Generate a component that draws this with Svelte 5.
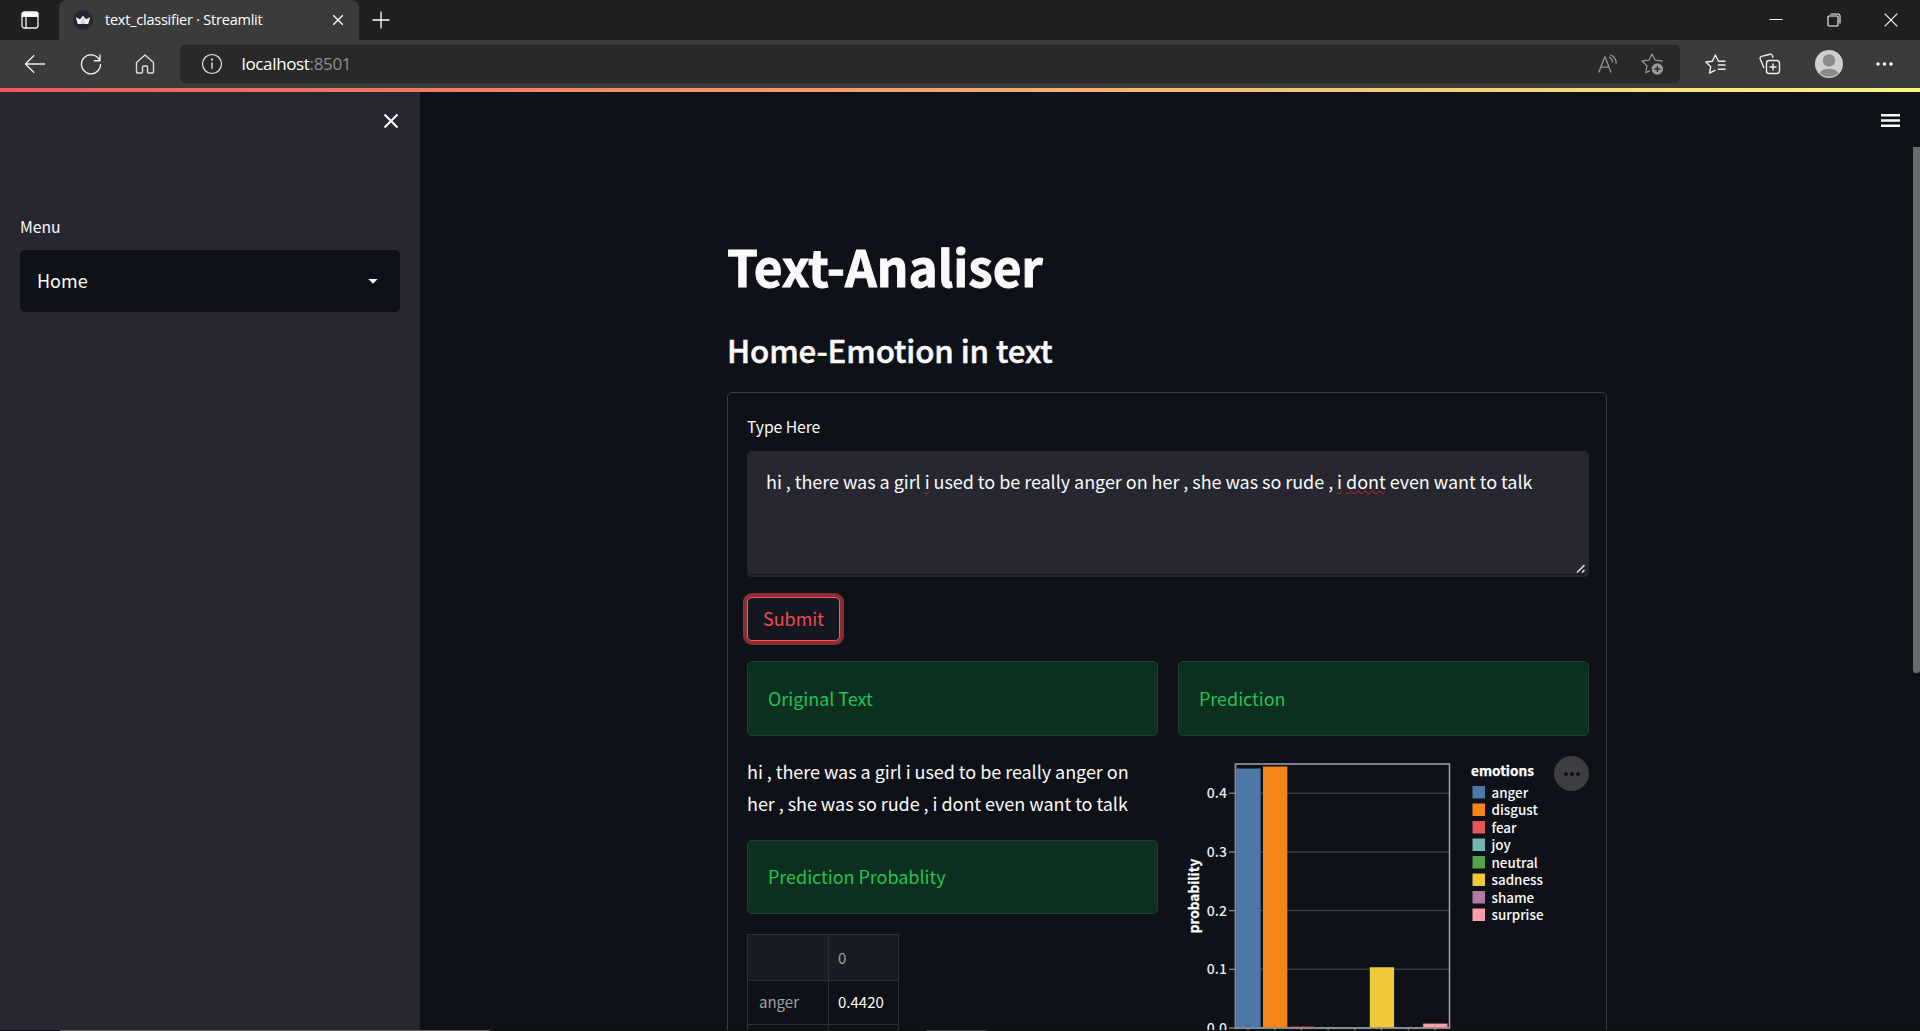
<script>
  const legend = [
    { name: 'anger', color: '#4c78a8' },
    { name: 'disgust', color: '#f58518' },
    { name: 'fear', color: '#e45756' },
    { name: 'joy', color: '#72b7b2' },
    { name: 'neutral', color: '#54a24b' },
    { name: 'sadness', color: '#eeca3b' },
    { name: 'shame', color: '#b279a2' },
    { name: 'surprise', color: '#ff9da6' }
  ];
  const values = [0.442, 0.4455, 0.0023, 0.0014, 0.0003, 0.1035, 0.0003, 0.0075];
  const ticks = [0.4, 0.3, 0.2, 0.1, 0];
  const base = 272;
  const y = (v) => base - v * 587;
</script>

<div class="window">
  <header class="tabstrip">
    <div class="tab-actions">
      <svg width="20" height="20" viewBox="0 0 20 20" fill="none" stroke="#f2f2f2" stroke-width="1.3"><rect x="2" y="2" width="16" height="16" rx="2.5" /><path d="M2.5 2.7h15v3.6h-15z" fill="#fff" /><path d="M6 6v12" /></svg>
    </div>
    <div class="tab">
      <svg class="favicon" width="20" height="20" viewBox="0 0 20 20"><circle cx="10" cy="10" r="10" fill="#262730" /><path d="M2.8 7.3 7 9.2 10 5.8l3 3.4 4.2-1.9-2 6.6H4.8Z" fill="#f4f4f6" /><path d="m10 5.8 2.5 8.1h-5Z" fill="#d0d0d6" /></svg>
      <span class="tab-title">text_classifier · Streamlit</span>
      <svg width="12" height="12" viewBox="0 0 12 12" stroke="#fff" stroke-width="1.3"><path d="m1.2 1.2 9.6 9.6M10.8 1.2l-9.6 9.6" /></svg>
    </div>
    <svg class="plus" width="18" height="18" viewBox="0 0 18 18" stroke="#fff" stroke-width="1.3"><path d="M9 .5v17M.5 9h17" /></svg>
    <div class="window-buttons">
      <svg width="14" height="14" viewBox="0 0 14 14" stroke="#fff"><path d="M.5 6.5h13" /></svg>
      <svg width="14" height="14" viewBox="0 0 14 14" stroke="#fff" stroke-width="1.1" fill="none"><rect x="1" y="3" width="10" height="10" rx="1" /><path d="M3.5 1H11a2 2 0 0 1 2 2v7.5" /></svg>
      <svg width="14" height="14" viewBox="0 0 14 14" stroke="#fff" stroke-width="1.1"><path d="m.7.7 12.6 12.6M13.3.7.7 13.3" /></svg>
    </div>
  </header>

  <nav class="toolbar">
    <div class="nav-icons">
      <svg width="22" height="20" viewBox="0 0 22 20" fill="none" stroke="#eee" stroke-width="1.3"><path d="M21 10H1.5M10.2 1.2 1.4 10l8.8 8.8" /></svg>
      <svg width="22" height="22" viewBox="0 0 22 22" fill="none" stroke="#eee" stroke-width="1.35"><path d="M20 8.2A9.5 9.5 0 1 0 20.5 11M20 1.5v6.2h-6.2" /></svg>
      <svg width="20" height="20" viewBox="0 0 20 20" fill="none" stroke="#ddd" stroke-width="1.4" stroke-linejoin="round"><path d="M1.5 8.5 10 1l8.5 7.5V18a1 1 0 0 1-1 1h-4a1 1 0 0 1-1-1v-5a1 1 0 0 0-1-1h-3a1 1 0 0 0-1 1v5a1 1 0 0 1-1 1h-4a1 1 0 0 1-1-1Z" /></svg>
    </div>
    <div class="address">
      <svg width="22" height="22" viewBox="0 0 22 22" fill="none" stroke="#e8e8e8" stroke-width="1.2"><circle cx="11" cy="11" r="9.5" /><path d="M11 9.5v6.3" stroke-width="1.4" /><circle cx="11" cy="6.7" r=".5" /></svg>
      <span class="url">localhost<span class="port">:8501</span></span>
      <div class="address-icons">
        <svg width="20" height="20" viewBox="0 0 20 20" fill="none" stroke="#929292" stroke-width="1.3"><path d="M.8 18.5 6.6 3.2h.6L13 18.5M3 13.2h8M11 3.2a6 6 0 0 1 3.4 5.3M12.2.8a9.5 9.5 0 0 1 6 9" /></svg>
        <svg width="22" height="22" viewBox="0 0 22 22" fill="none" stroke="#929292" stroke-width="1.3" stroke-linejoin="round"><path d="M20.7 9.2V8l-6.5-.8L11 1 8 7.2 1 8l5 5-1.2 6.7 4.2-2" /><circle cx="16.3" cy="16" r="5.7" fill="#999" stroke="none" /><path d="M16.3 13v6M13.3 16h6" stroke="#292929" stroke-width="1.3" /></svg>
      </div>
    </div>
    <div class="right-icons">
      <svg width="21" height="20" viewBox="0 0 21 20" fill="none" stroke="#eee" stroke-width="1.4" stroke-linejoin="round"><path d="M20.5 7.2h-7L10.3 1 7.4 7.2.9 8l4.8 4.8-1.2 6.4 6-3.1M12.8 11h7.7M12.8 15.3h7.7" /></svg>
      <svg width="22" height="22" viewBox="0 0 22 22" fill="none" stroke="#eee" stroke-width="1.4"><rect x="7.5" y="7.5" width="13" height="13" rx="2.5" /><path d="M14 10.5v7M10.5 14h7M5 15 1.2 6a2 2 0 0 1 1.3-2.6L11 1.2a2 2 0 0 1 2.3 1.3l.8 2.3" /></svg>
      <svg width="28" height="28" viewBox="0 0 28 28"><circle cx="14" cy="14" r="14" fill="#d0cfcd" /><circle cx="14" cy="10.5" r="6.2" fill="#8d8b88" /><path d="M4.5 23a10.3 7 0 0 1 19 0 14 14 0 0 1-19 0Z" fill="#8d8b88" /></svg>
      <svg width="17" height="4" viewBox="0 0 17 4" fill="#fff"><circle cx="2" cy="2" r="1.7" /><circle cx="8.5" cy="2" r="1.7" /><circle cx="15" cy="2" r="1.7" /></svg>
    </div>
  </nav>

  <div class="decoration"></div>

  <div class="app">
    <aside class="sidebar">
      <svg class="close" width="16" height="16" viewBox="0 0 16 16" stroke="#fafafa" stroke-width="2.1"><path d="m1.5 1.5 13 13M14.5 1.5l-13 13" /></svg>
      <span class="label menu-label">Menu</span>
      <div class="select">
        <span class="home">Home</span>
        <svg width="10" height="5" viewBox="0 0 10 5" fill="#fafafa"><path d="M.4 0h9.2L5 4.8Z" /></svg>
      </div>
    </aside>

    <main>
      <div class="content">
        <h1>Text-Analiser</h1>
        <h2>Home-Emotion in text</h2>
        <section class="form">
          <span class="label type-label">Type Here</span>
          <div class="textarea">
            <span class="body-text">hi , there was a girl <u>i</u> used to be really anger on her , she was so rude , <u>i</u> <u>dont</u> even want to talk</span>
            <svg class="grip" width="11" height="11" viewBox="0 0 11 11" stroke="#ddd" stroke-width="1.6"><path d="m2 9.5 7.5-7.5M7 9.5 9.5 7" /></svg>
          </div>
          <button>Submit</button>
          <div class="columns">
            <div class="column">
              <div class="alert first">Original Text</div>
              <p class="body-text">hi , there was a girl i used to be really anger on<br />her , she was so rude , i dont even want to talk</p>
              <div class="alert second">Prediction Probablity</div>
              <div class="table">
                <div class="cell head"></div>
                <div class="cell head">0</div>
                <div class="cell name">anger</div>
                <div class="cell">0.4420</div>
                <div class="cell"></div>
                <div class="cell"></div>
              </div>
            </div>
            <div class="column">
              <div class="alert first">Prediction</div>
              <div class="chart">
                <svg width="376" height="290" viewBox="0 0 376 290">
                  {#each ticks as t}
                    <path d="M51 {y(t)}h6" stroke="#888a90" stroke-width="1.3" />
                    <path d="M57 {y(t)}h214" stroke="#363842" stroke-width="1.5" />
                    <text class="tick" x="49" y={y(t) + 5}>{t.toFixed(1)}</text>
                  {/each}
                  <rect x="57.5" y="8" width="214" height="264" fill="none" stroke="#a3a5ad" stroke-width="1.5" />
                  {#each values as v, i}
                    <rect x={58.3 + i * 26.7} y={y(v)} width="24.3" height={base - y(v)} fill={legend[i].color} />
                    <path d="M{70 + i * 26.7} 272v4" stroke="#a3a5ad" />
                  {/each}
                  <path d="M57.5 8v264H272" fill="none" stroke="#888a90" stroke-width="1.4" />
                  <text class="axis-title" transform="translate(21 140) rotate(-90)">probability</text>
                  <text class="legend-title" x="293" y="20">emotions</text>
                  {#each legend as l, i}
                    <rect x="294.5" y={30 + i * 17.5} width="12.5" height="12.5" fill={l.color} />
                    <text class="legend-label" x="313.5" y={41.5 + i * 17.5}>{l.name}</text>
                  {/each}
                </svg>
                <div class="more"><i></i><i></i><i></i></div>
              </div>
            </div>
          </div>
        </section>
      </div>
      <div class="rail">
        <svg width="19" height="13" viewBox="0 0 19 13" fill="#fafafa"><path d="M0 0h19v2.4H0zM0 5.3h19v2.4H0zM0 10.6h19V13H0z" /></svg>
        <div class="thumb"></div>
      </div>
    </main>
  </div>
  <div class="edge"><div class="edge-line"></div><div class="edge-mark"></div></div>
</div>

<style>
  :global(body) { margin: 0; background: #0e1117; overflow: hidden; }
  * { box-sizing: border-box; }
  svg { display: block; flex: none; }
  .window {
    display: flex; flex-direction: column; width: 1920px; height: 1031px; overflow: hidden;
    background: #0e1117; color: #fafafa;
    font-family: "Noto Sans CJK SC", "Noto Sans", sans-serif; white-space: nowrap;
  }

  .tabstrip { display: flex; align-items: center; flex: none; height: 40px; background: #202020; }
  .tab-actions { width: 59px; padding-left: 20px; }
  .tab {
    display: flex; align-items: center; width: 300px; height: 40px; padding: 0 15px 0 14px;
    border-radius: 8px 8px 0 0; background: #3b3b3b;
  }
  .tab-title { flex: 1; margin-left: 12px; font: 14.5px/20px "Open Sans", sans-serif; letter-spacing: -0.23px; color: #fff; }
  .plus { margin-left: 13px; }
  .window-buttons { display: flex; gap: 43.5px; margin-left: auto; padding-right: 22px; }

  .toolbar { display: flex; align-items: center; flex: none; height: 48px; background: #3b3b3b; }
  .nav-icons { display: flex; align-items: center; gap: 33.5px; width: 180px; padding-left: 24px; }
  .address {
    display: flex; align-items: center; width: 1500px; height: 38px; padding: 0 17px 0 21px;
    border-radius: 5px; background: #292929;
  }
  .url { flex: 1; margin-left: 18.5px; font: 17px/24px "Open Sans", sans-serif; letter-spacing: -0.35px; color: #fff; }
  .port { color: #8d8d8d; }
  .address-icons { display: flex; align-items: center; gap: 23px; }
  .right-icons { display: flex; align-items: center; gap: 33.5px; margin-left: 24.5px; }

  .decoration { flex: none; height: 4px; background: linear-gradient(90deg, #f0585a, #f8f781); }
  .app { display: flex; flex: none; height: 938px; overflow: hidden; }

  .sidebar { display: flex; flex-direction: column; flex: none; width: 420px; padding: 21px 20px 0; background: #262730; }
  .close { align-self: flex-end; margin-right: 1px; }
  .label { font-size: 15.8px; line-height: 24px; letter-spacing: -0.1px; }
  .menu-label { margin-top: 86px; }
  .select {
    display: flex; align-items: center; justify-content: space-between; height: 62px; margin-top: 11px;
    padding: 0 22px 0 17px; border-radius: 5px; background: #0e1117;
  }
  .home { padding-bottom: 2px; font-size: 18px; line-height: 32px; }

  main { display: flex; flex: 1; justify-content: flex-end; }
  .content { width: 880px; padding-top: 139px; }
  h1, h2, p { margin: 0; }
  h1 { height: 70px; font-size: 49.5px; line-height: 70px; font-weight: 700; letter-spacing: -0.05px; -webkit-text-stroke: 0.9px #fafafa; }
  h2 { height: 44px; margin-top: 27px; font-size: 31.3px; line-height: 44px; font-weight: 500; letter-spacing: -0.12px; -webkit-text-stroke: 0.5px #fafafa; }
  .form {
    display: flex; flex-direction: column; align-items: flex-start; height: 800px; margin-top: 20px; padding: 22px 17px 0 19px;
    border: 1px solid #3b3e45; border-radius: 5px;
  }
  .type-label { height: 24px; }
  .textarea {
    display: flex; width: 842px; height: 126px; margin-top: 12px; padding: 14px 3px 3px 19px; border-radius: 5px; background: #262730;
    box-shadow: inset 0 -2px #262730, inset 0 -3px #14161d;
  }
  .body-text { font-size: 18px; line-height: 32px; letter-spacing: -0.045px; }
  .textarea .body-text { flex: 1; }
  u { text-decoration: underline wavy #d81e1e 1px; text-underline-offset: 1px; text-decoration-skip-ink: none; }
  .grip { align-self: flex-end; }
  button {
    width: 93px; height: 44px; margin-top: 20px; padding: 0 0 2px; border: 1px solid #ff5a5a; border-radius: 5px;
    background: #131720; color: #ee4b50; box-shadow: 0 0 0 4px #8b2d32; font: 18px/32px "Noto Sans CJK SC", sans-serif;
  }
  .columns { display: flex; gap: 20px; margin-top: 20px; }
  .column { width: 411px; }
  .alert {
    display: flex; align-items: center; height: 75px; padding: 0 20px 2px; border: 1px solid #14462a; border-radius: 5px;
    background: #0d2f1f; color: #21c354; font-size: 18px; line-height: 32px; letter-spacing: -0.04px;
  }
  .column p { margin: 19px 0 21px; }
  .second { height: 74px; }
  .table { display: grid; grid-template-columns: 81px 70px; width: 152px; margin-top: 20px; border: solid #2c2f38; border-width: 1px 0 0 1px; font-size: 15px; }
  .cell { height: 44px; padding-left: 9px; border: solid #2c2f38; border-width: 0 1px 1px 0; line-height: 41px; }
  .head { height: 46px; background: #1a1c24; color: #a0a1a6; line-height: 45px; }
  .name { padding-left: 11px; color: #a0a1a6; }

  .chart { display: flex; align-items: flex-start; margin-top: 20px; }
  .tick { fill: #e6eaf1; font-size: 14px; font-weight: 500; text-anchor: end; }
  .axis-title, .legend-title { fill: #fff; font-size: 13.6px; font-weight: 700; stroke: #fff; stroke-width: 0.25px; }
  .axis-title { text-anchor: middle; }
  .legend-label { fill: #fafafa; font-size: 13.4px; font-weight: 500; }
  .more { display: flex; align-items: center; justify-content: center; gap: 2px; width: 35px; height: 35px; border-radius: 50%; background: #3d3e42; }
  .more i { width: 4px; height: 4px; border-radius: 50%; background: #111; }

  .rail { display: flex; flex-direction: column; align-items: flex-end; width: 313px; padding-top: 22px; }
  .rail svg { margin-right: 20px; }
  .thumb { width: 7px; height: 526px; margin-top: 20px; border-radius: 0 0 3px 3px; background: #696b6e; }
  .edge { display: flex; gap: 436px; flex: none; height: 1px; padding-left: 60px; background: #101010; }
  .edge-line { width: 430px; height: 1px; background: #66605f; }
  .edge-mark { width: 61px; height: 1px; background: #3c3c3e; }
</style>
